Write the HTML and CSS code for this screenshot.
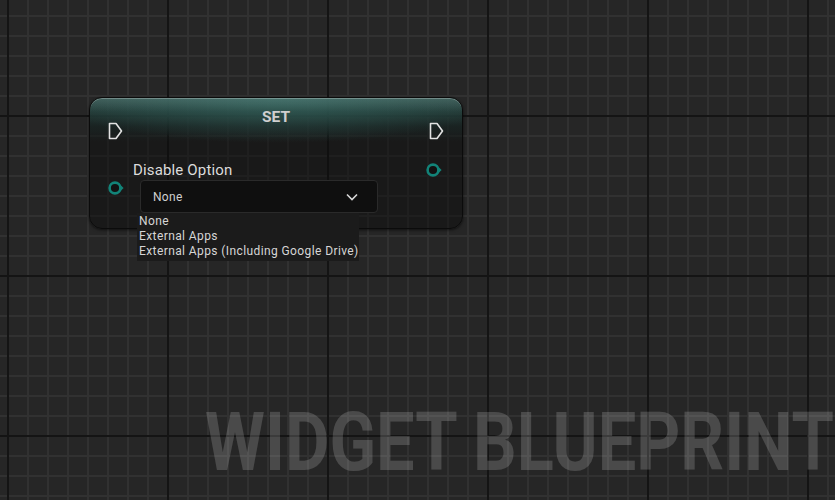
FILE: index.html
```html
<!DOCTYPE html>
<html>
<head>
<meta charset="utf-8">
<link rel="stylesheet" href="styles.css">
</head>
<body>
<div class="canvas">
  <div class="node">
    <div class="node-top">
      <svg class="exec" width="15" height="18" viewBox="0 0 15 18"><path d="M1.5 1.5 H8 L13.5 9 L8 16.5 H1.5 Z" fill="none" stroke="#e2e2e2" stroke-width="1.6" stroke-linejoin="round"/></svg>
      <div class="title">SET</div>
      <svg class="exec" width="15" height="18" viewBox="0 0 15 18"><path d="M1.5 1.5 H8 L13.5 9 L8 16.5 H1.5 Z" fill="none" stroke="#e2e2e2" stroke-width="1.6" stroke-linejoin="round"/></svg>
    </div>
    <div class="node-body">
      <div class="pin-col left">
        <svg class="data-pin" width="16" height="14" viewBox="0 0 16 14"><circle cx="7" cy="7" r="5.4" fill="#121212" stroke="#128378" stroke-width="2.6"/><path d="M12.8 4.3 L15.6 7 L12.8 9.7 Z" fill="#128378"/></svg>
      </div>
      <div class="content">
        <div class="label">Disable Option</div>
        <div class="combo">
          <span>None</span>
          <svg width="12" height="8" viewBox="0 0 12 8"><path d="M1 1.5 L6 6.5 L11 1.5" fill="none" stroke="#d8d8d8" stroke-width="1.6"/></svg>
        </div>
      </div>
      <div class="pin-col right">
        <svg class="data-pin" width="20" height="14" viewBox="0 0 20 14"><circle cx="8" cy="7" r="5.4" fill="#121212" stroke="#128378" stroke-width="2.6"/><path d="M13.8 4.3 L16.6 7 L13.8 9.7 Z" fill="#128378"/></svg>
      </div>
    </div>
    <ul class="menu">
      <li>None</li>
      <li>External Apps</li>
      <li>External Apps (Including Google Drive)</li>
    </ul>
  </div>
  <div class="watermark">WIDGET BLUEPRINT</div>
</div>
</body>
</html>
```
FILE: styles.css
```css
html, body {
  margin: 0;
  padding: 0;
}
body {
  width: 835px;
  height: 500px;
  overflow: hidden;
  font-family: Roboto, "Open Sans", sans-serif;
}
.canvas {
  position: relative;
  width: 835px;
  height: 500px;
  background-color: #262626;
  background-image:
    linear-gradient(to right, #141414 2px, transparent 2px),
    linear-gradient(to bottom, #141414 2px, transparent 2px),
    linear-gradient(to right, #313131 2px, transparent 2px),
    linear-gradient(to bottom, #313131 2px, transparent 2px);
  background-size: 160px 160px, 160px 160px, 20px 20px, 20px 20px;
  background-position: 7px 0, 0 115px, 7px 0, 0 15px;
  overflow: hidden;
}
.node {
  position: absolute;
  left: 89px;
  top: 97px;
  width: 374px;
  height: 132px;
  box-sizing: border-box;
  border-radius: 13px;
  border: 1px solid #0b0b0b;
  background:
    linear-gradient(to bottom, rgba(255,255,255,0.08) 0px, rgba(255,255,255,0) 14px),
    radial-gradient(ellipse 60% 45px at 50% 0, rgba(60,120,112,0.55), rgba(60,120,112,0) 100%),
    linear-gradient(to bottom, rgba(55,95,90,0.8) 0px, rgba(38,68,64,0.75) 14px, rgba(26,42,40,0.6) 28px, rgba(20,20,20,0) 44px),
    rgba(12,12,12,0.45);
  box-shadow: inset 0 1px 0 rgba(255,255,255,0.25), 0 1px 3px rgba(0,0,0,0.6);
}
.node-top {
  display: grid;
  grid-template-columns: 15px 1fr 15px;
  padding: 0 18px;
  align-items: start;
}
.exec {
  display: block;
  margin-top: 24px;
}
.title {
  text-align: center;
  font-weight: 700;
  font-size: 15.5px;
  color: #cfcfcf;
  padding-top: 10px;
  line-height: 18px;
}
.node-body {
  display: flex;
  margin-top: 21px;
}
.pin-col.left {
  width: 18px;
  padding-left: 18px;
  padding-top: 20px;
}
.pin-col.right {
  padding-left: 47px;
  padding-top: 2px;
}
.data-pin {
  display: block;
}
.content {
  display: flex;
  flex-direction: column;
  margin-left: 7px;
}
.label {
  color: #dcdcdc;
  font-size: 15px;
  line-height: 18px;
  letter-spacing: 0.15px;
}
.combo {
  margin-left: 7px;
  margin-top: 1px;
  width: 238px;
  height: 33px;
  box-sizing: border-box;
  background: #0f0f0f;
  border: 1px solid #2a2a2a;
  border-radius: 4px;
  display: flex;
  align-items: center;
  justify-content: space-between;
  padding: 0 19px 0 12px;
  color: #cfcfcf;
  font-size: 12px;
  letter-spacing: 0.3px;
}
.combo svg {
  display: block;
}
.menu {
  position: absolute;
  left: 47px;
  top: 115px;
  margin: 0;
  padding: 1px 0 2px 2px;
  list-style: none;
  width: max-content;
  white-space: nowrap;
  background: #1b1b1b;
  color: #d6d6d6;
  font-size: 12px;
  line-height: 15px;
  letter-spacing: 0.4px;
}
.watermark {
  position: absolute;
  left: 205px;
  top: 392px;
  font-family: Roboto, sans-serif;
  font-weight: 700;
  font-size: 82px;
  line-height: 100px;
  color: rgba(255,255,255,0.17);
  white-space: nowrap;
  transform-origin: 0 0;
  transform: scaleX(0.835);
}
```
